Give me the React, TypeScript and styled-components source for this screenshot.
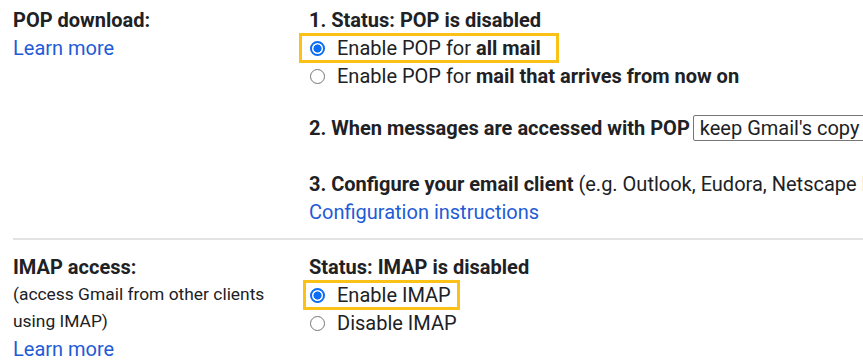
import React from "react";
import styled, { createGlobalStyle } from "styled-components";

const GlobalStyle = createGlobalStyle`
    html, body {
        margin: 0;
        padding: 0;
        background: #fff;
        overflow: hidden;
    }

    body {
        font-family: Roboto, "Liberation Sans", Arial, sans-serif;
        color: #202124;
    }
`

const Page = styled.div`
    width: 863px;
    height: 361px;
    overflow: hidden;
`

const Section = styled.div<{ $top: number; $bottom: number }>`
    display: grid;
    grid-template-columns: 296px 1fr;
    margin-left: 13px;
    padding-top: ${p => p.$top}px;
    padding-bottom: ${p => p.$bottom}px;
`

const Divider = styled.div`
    margin-left: 13px;
    height: 2px;
    background: #e3e3e3;
`

const Label = styled.div`
    display: flex;
    flex-direction: column;
`

const Title = styled.div`
    font-size: 20px;
    line-height: 28px;
    font-weight: 700;
    white-space: nowrap;
`

const Note = styled.div`
    font-size: 17.4px;
    line-height: 27px;
    white-space: nowrap;
`

const Link = styled.a`
    font-size: 20px;
    line-height: 28px;
    color: #1f5bd6;
    text-decoration: none;
    cursor: pointer;
`

const Settings = styled.div`
    display: flex;
    flex-direction: column;
    font-size: 20px;
    line-height: 28px;
    white-space: nowrap;
`

const Line = styled.div<{ $gap?: number }>`
    display: flex;
    align-items: center;
    margin-top: ${p => p.$gap ?? 0}px;
    height: 28px;
`

const Strong = styled.b`
    font-weight: 700;
`

const Choice = styled.label<{ $box?: [number, number] }>`
    position: relative;
    display: flex;
    align-items: center;
    gap: 12px;
    height: 28px;
    width: max-content;
    cursor: pointer;

    &::after {
        content: "";
        display: ${p => (p.$box ? "block" : "none")};
        position: absolute;
        top: -1px;
        bottom: -1px;
        left: ${p => (p.$box ? -p.$box[0] : 0)}px;
        right: ${p => (p.$box ? -p.$box[1] : 0)}px;
        border: 3px solid #fbc117;
        pointer-events: none;
    }
`

const Radio = styled.span<{ $on?: boolean }>`
    box-sizing: border-box;
    width: 15px;
    height: 15px;
    margin-left: 1px;
    border-radius: 50%;
    border: ${p => (p.$on ? "2px solid #0b6cf5" : "1.5px solid #767676")};
    background: ${p => (p.$on ? "radial-gradient(circle, #0b6cf5 0 3.8px, #fff 4.3px)" : "#fff")};
    flex-shrink: 0;
`

const Select = styled.div`
    box-sizing: border-box;
    margin-left: 3px;
    height: 26px;
    padding: 0 6px;
    border: 1px solid #767676;
    border-radius: 2px;
    display: flex;
    align-items: center;
    flex-shrink: 0;
`

const Muted = styled.span`
    font-weight: 400;
`

export default function App() {
    return (
        <Page>
            <GlobalStyle />
            <Section $top={6} $bottom={12}>
                <Label>
                    <Title>POP download:</Title>
                    <Link>Learn more</Link>
                </Label>
                <Settings>
                    <Line><Strong>1. Status: POP is disabled</Strong></Line>
                    <Choice $box={[10, 18]}>
                        <Radio $on />
                        <span>Enable POP for <Strong>all mail</Strong></span>
                    </Choice>
                    <Choice>
                        <Radio />
                        <span>Enable POP for <Strong>mail that arrives from now on</Strong></span>
                    </Choice>
                    <Line $gap={24}>
                        <Strong>2. When messages are accessed with POP</Strong>
                        <Select>keep Gmail's copy in the Inbox</Select>
                    </Line>
                    <Line $gap={28}>
                        <Strong>3. Configure your email client</Strong>
                        <Muted>&nbsp;(e.g. Outlook, Eudora, Netscape Mail)</Muted>
                    </Line>
                    <Link>Configuration instructions</Link>
                </Settings>
            </Section>
            <Divider />
            <Section $top={13} $bottom={0}>
                <Label>
                    <Title>IMAP access:</Title>
                    <Note>(access Gmail from other clients</Note>
                    <Note>using IMAP)</Note>
                    <Link>Learn more</Link>
                </Label>
                <Settings>
                    <Line><Strong>Status: IMAP is disabled</Strong></Line>
                    <Choice $box={[6, 9]}>
                        <Radio $on />
                        <span>Enable IMAP</span>
                    </Choice>
                    <Choice>
                        <Radio />
                        <span>Disable IMAP</span>
                    </Choice>
                </Settings>
            </Section>
        </Page>
    );
}
